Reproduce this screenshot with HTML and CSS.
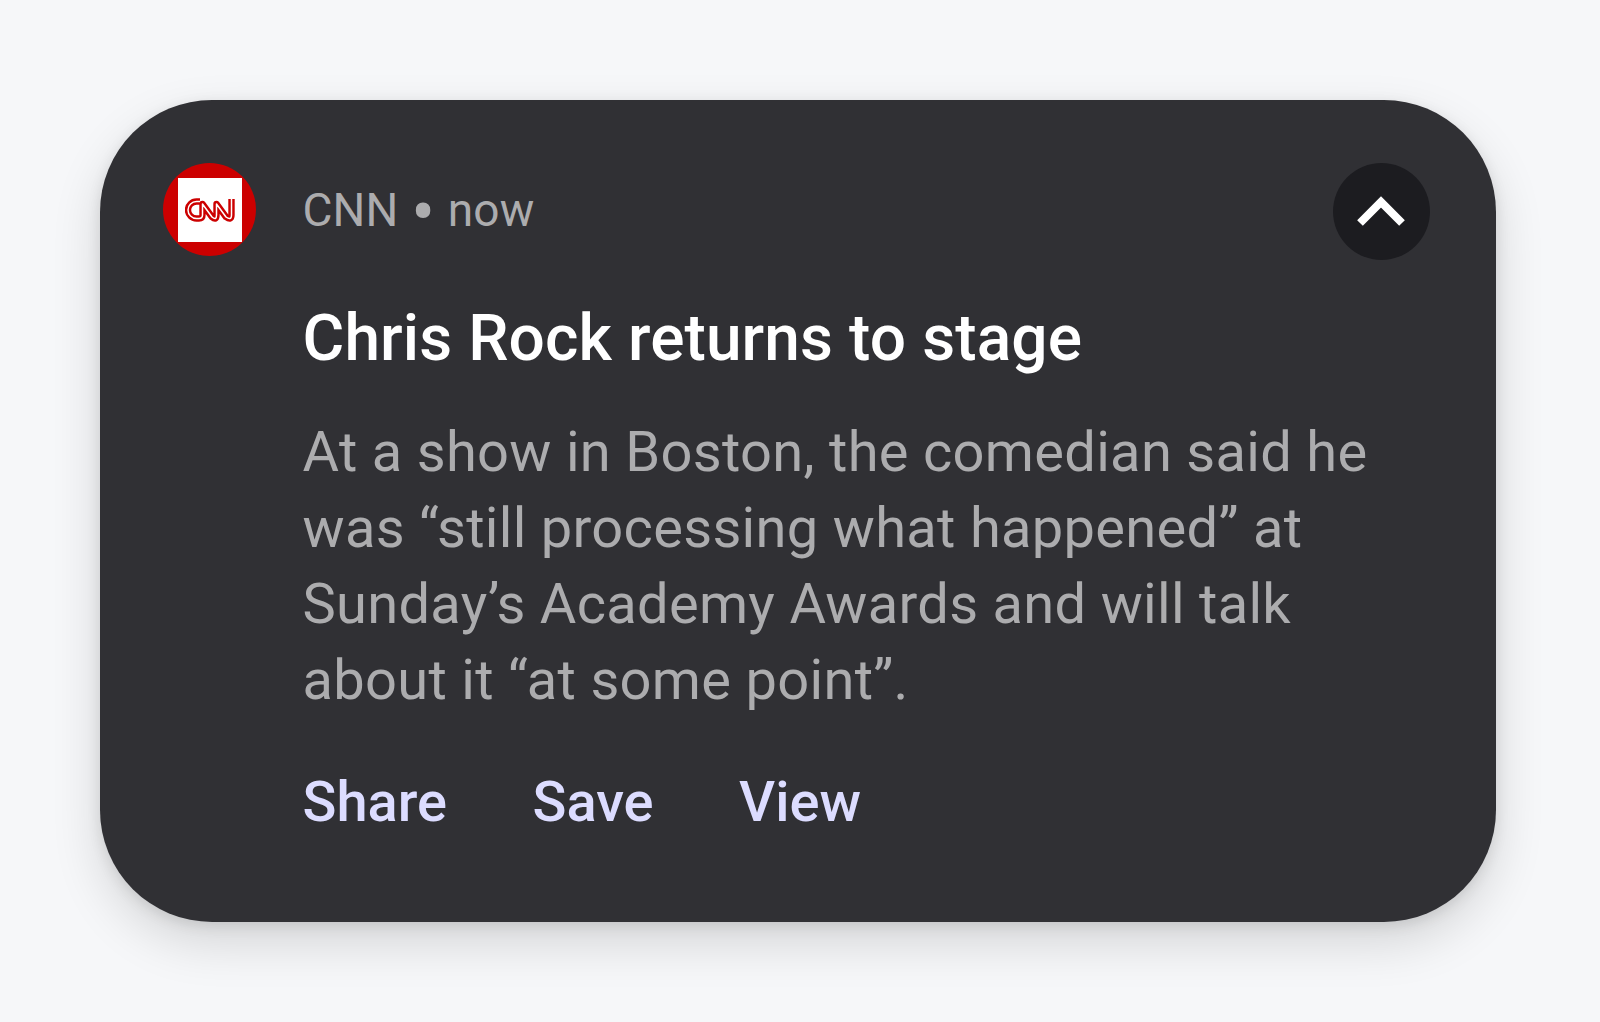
FILE: index.html
```html
<!DOCTYPE html>
<html lang="en">
<head>
<meta charset="utf-8">
<title>Notification</title>
<link rel="stylesheet" href="styles.css">
</head>
<body>
<main class="card">
  <div class="avatar">
    <div class="logo-box">
      <svg class="logo" viewBox="0 0 50 24" aria-label="CNN">
        <path class="logo-red" d="M15 3.500H11.500A8.500 8.500 0 0 0 11.500 20.500H14Q17.500 20.500 17.500 17V6L27 19Q31.500 23 31.500 17V6L41 19Q46.500 23 46.500 17V1"/>
        <path class="logo-white" d="M15 3.500H11.500A8.500 8.500 0 0 0 11.500 20.500H14Q17.500 20.500 17.500 17V6L27 19Q31.500 23 31.500 17V6L41 19Q46.500 23 46.500 17V1"/>
      </svg>
    </div>
  </div>
  <div class="content">
    <div class="meta">CNN <span class="dot">•</span> now</div>
    <h1 class="title">Chris Rock returns to stage</h1>
    <p class="body">At a show in Boston, the comedian said he<br>was “still processing what happened” at<br>Sunday’s Academy Awards and will talk<br>about it “at some point”.</p>
    <div class="actions"><span>Share</span><span>Save</span><span>View</span></div>
  </div>
  <button class="toggle" aria-label="Collapse">
    <svg viewBox="0 0 48 32" class="chevron"><path d="M3 27L24 6L45 27" fill="none" stroke="#fff" stroke-width="8"/></svg>
  </button>
</main>
</body>
</html>
```
FILE: styles.css
```css
* { box-sizing: border-box; }
html, body { margin: 0; height: 100%; }
body {
  background: #f6f7f9;
  padding: 100px 104px 100px 100px;
  font-family: Roboto, "Noto Sans", sans-serif;
}
.card {
  height: 822px;
  background: #303034;
  border-radius: 112px;
  box-shadow: 0 20px 50px rgba(0, 0, 0, 0.14), 0 4px 14px rgba(0, 0, 0, 0.1);
  padding: 63px 66.500px 0 63px;
  display: flex;
  align-items: flex-start;
}
.avatar {
  width: 93px;
  height: 93px;
  flex: none;
  border-radius: 50%;
  background: #cc0000;
  display: flex;
  align-items: center;
  justify-content: center;
}
.logo-box {
  width: 64px;
  height: 64px;
  background: #fff;
  display: flex;
  align-items: center;
  justify-content: center;
}
.logo { width: 50px; height: 24px; display: block; }
.logo-red, .logo-white { fill: none; stroke-linejoin: round; }
.logo-red { stroke: #cc0000; stroke-width: 6.4; }
.logo-white { stroke: #fff; stroke-width: 1.5; }
.content { flex: 1; min-width: 0; margin-left: 46.5px; color: #acacae; }
.meta { font-size: 46px; line-height: 94px; letter-spacing: 0.1px; }
.dot {
  font-size: 72px;
  line-height: 0;
  vertical-align: -11px;
  margin: 0 1px;
}
.title {
  margin: 42px 0 0;
  font-size: 64px;
  font-weight: 500;
  line-height: 80px;
  letter-spacing: 0.1px;
  color: #fff;
}
.body {
  margin: 35px 0 0;
  font-size: 56px;
  line-height: 76px;
  letter-spacing: 0.31px;
  white-space: nowrap;
}
.actions {
  display: flex;
  gap: 85.500px;
  margin-top: 49px;
  font-size: 56px;
  font-weight: 500;
  line-height: 70px;
  color: #dcdcff;
}
.toggle {
  width: 97px;
  height: 97px;
  flex: none;
  border: 0;
  padding: 0;
  border-radius: 50%;
  background: #1c1c20;
  display: flex;
  align-items: center;
  justify-content: center;
}
.chevron { width: 48px; height: 32px; display: block; }
```
